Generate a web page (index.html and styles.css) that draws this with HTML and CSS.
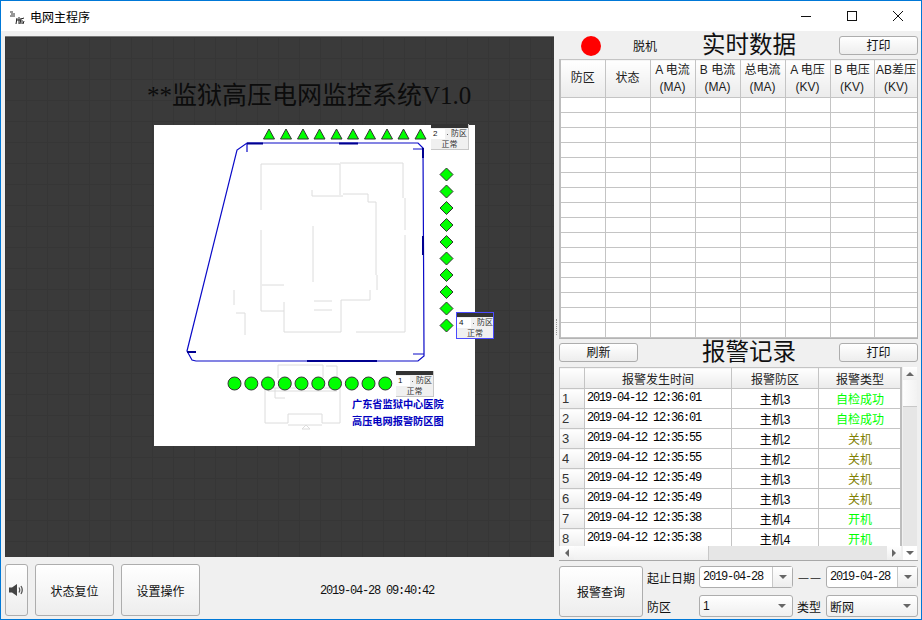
FILE: index.html
```html
<!DOCTYPE html>
<html lang="zh-CN">
<head>
	<meta charset="UTF-8">
	<meta name="viewport" content="width=device-width, initial-scale=1.0">
	<title>电网主程序</title>
	<link rel="stylesheet" href="styles.css">
</head>
<body>
<div class="window">
	<div class="titlebar">
		<svg class="app-icon" width="16" height="16" viewBox="0 0 16 16">
			<path d="M1 3h3M2 5h4M1 7h5" stroke="#333" stroke-width="1" fill="none"/>
			<path d="M8 9l-1 6M10 8v7M7 11h4M12 9l-1 6M12 10l3-1M13 11v4M15 12l-1 3" stroke="#222" stroke-width="1" fill="none"/>
		</svg>
		<span class="app-name">电网主程序</span>
		<div class="win-controls">
			<svg class="win-btn" width="46" height="30" viewBox="0 0 46 30"><path d="M18 15.500h10" stroke="#111"/></svg>
			<svg class="win-btn" width="46" height="30" viewBox="0 0 46 30"><rect x="18.500" y="10.500" width="9" height="9" fill="none" stroke="#111"/></svg>
			<svg class="win-btn" width="46" height="30" viewBox="0 0 46 30"><path d="M18 10l10 10M28 10l-10 10" stroke="#111" fill="none"/></svg>
		</div>
	</div>

	<div class="main">
		<div class="left">
			<div class="stage">
				<div class="stage-title">**监狱高压电网监控系统V1.0</div>
				<div class="map">
					<svg class="map-art" width="321" height="321" viewBox="154 125 321 321">
						<g class="plan">
							<path d="M261 210V164H340V195M340 163H403V198M405 198V230M405 235V332H356"/>
							<path d="M343 194H368V202H376V275M377 275V290M312 190V196H343M313 226V282"/>
							<path d="M261 230V311H284M262 285H284M284 302V332H341V300H370V290"/>
							<path d="M234 290V305M236 313H245V335M314 301H332M314 310H332"/>
							<path d="M278 378V365H323V378M326 366H337V378"/>
							<path d="M265 388H340V423H322V414H288V423H265ZM268 391H337M288 425H322M275 388V398H285"/>
							<path d="M302 429L306 425L310 429Z"/>
						</g>
						<path class="fence" d="M187 351L192 360L196 361H418L424 356V351L423 148L418 143H247L237 150Z"/>
						<path class="fence" d="M247 144V152M413 149H423M413 354H424"/>
						<path class="fence-thick" d="M247 143.500H263M339 143.500H358M423 148V158M423 236V255M307 361H377M187 352H196"/>

						<g class="sensor">
							<path d="M269 129l5.500 10h-11z"/><path d="M286 129l5.500 10h-11z"/><path d="M303 129l5.500 10h-11z"/><path d="M319.500 129l5.500 10h-11z"/><path d="M336.500 129l5.500 10h-11z"/>
							<path d="M353 129l5.500 10h-11z"/><path d="M370 129l5.500 10h-11z"/><path d="M387 129l5.500 10h-11z"/><path d="M403.500 129l5.500 10h-11z"/><path d="M420.500 129l5.500 10h-11z"/>

							<path d="M446.500 168l6.500 6.500-6.500 6.500-6.500-6.500z"/><path d="M446.500 185l6.500 6.500-6.500 6.500-6.500-6.500z"/><path d="M446.500 201.500l6.500 6.500-6.500 6.500-6.500-6.500z"/><path d="M446.500 218.500l6.500 6.500-6.500 6.500-6.500-6.500z"/><path d="M446.500 235.500l6.500 6.500-6.500 6.500-6.500-6.500z"/>
							<path d="M446.500 252l6.500 6.500-6.500 6.500-6.500-6.500z"/><path d="M446.500 268.500l6.500 6.500-6.500 6.500-6.500-6.500z"/><path d="M446.500 285.500l6.500 6.500-6.500 6.500-6.500-6.500z"/><path d="M446.500 302l6.500 6.500-6.500 6.500-6.500-6.500z"/><path d="M446.500 319l6.500 6.500-6.500 6.500-6.500-6.500z"/>

							<circle cx="234.500" cy="383.500" r="6.500"/><circle cx="251.300" cy="383.500" r="6.500"/><circle cx="268" cy="383.500" r="6.500"/><circle cx="284.800" cy="383.500" r="6.500"/><circle cx="301.500" cy="383.500" r="6.500"/>
							<circle cx="318.300" cy="383.500" r="6.500"/><circle cx="335" cy="383.500" r="6.500"/><circle cx="351.800" cy="383.500" r="6.500"/><circle cx="368.500" cy="383.500" r="6.500"/><circle cx="385.300" cy="383.500" r="6.500"/>
						</g>
					</svg>

					<div class="zone zone-top">
						<div class="zone-bar"></div>
						<div class="zone-row"><span class="zone-num">2</span><span class="zone-spin"></span><span class="zone-label">防区</span></div>
						<div class="zone-state">正常</div>
					</div>
					<div class="zone zone-side">
						<div class="zone-bar"></div>
						<div class="zone-row"><span class="zone-num">4</span><span class="zone-spin"></span><span class="zone-label">防区</span></div>
						<div class="zone-state">正常</div>
					</div>
					<div class="zone zone-bottom">
						<div class="zone-bar"></div>
						<div class="zone-row"><span class="zone-num">1</span><span class="zone-spin"></span><span class="zone-label">防区</span></div>
						<div class="zone-state">正常</div>
					</div>
					<div class="map-caption">广东省监狱中心医院<br>高压电网报警防区图</div>
				</div>
			</div>

			<div class="toolbar">
				<button class="btn btn-sound">
					<svg width="15" height="14" viewBox="0 0 15 14">
						<path d="M0 4.500h3L8 1v12L3 9.500H0z" fill="#444"/>
						<path d="M10 4.500q1.500 2.500 0 5M12 3q2.500 4 0 8" fill="none" stroke="#555" stroke-width="1.300"/>
					</svg>
				</button>
				<button class="btn btn-tool">状态复位</button>
				<button class="btn btn-tool">设置操作</button>
				<div class="clock mono">2019-04-28 09:40:42</div>
			</div>
		</div>

		<div class="splitter"><span class="grip"></span></div>

		<div class="right">
			<div class="head-row">
				<span class="led"></span>
				<span class="link-state">脱机</span>
				<span class="heading">实时数据</span>
				<button class="btn btn-small">打印</button>
			</div>

			<div class="data-box">
				<table class="data-table">
					<colgroup>
						<col class="col-wide"><col class="col-wide"><col class="col-wide"><col class="col-wide"><col class="col-wide"><col class="col-wide"><col class="col-narrow"><col class="col-narrow">
					</colgroup>
					<thead>
						<tr>
							<th>防区</th><th>状态</th><th>A 电流<br>(MA)</th><th>B 电流<br>(MA)</th><th>总电流<br>(MA)</th><th>A 电压<br>(KV)</th><th>B 电压<br>(KV)</th><th>AB差压<br>(KV)</th>
						</tr>
					</thead>
					<tbody>
						<tr><td></td><td></td><td></td><td></td><td></td><td></td><td></td><td></td></tr>
						<tr><td></td><td></td><td></td><td></td><td></td><td></td><td></td><td></td></tr>
						<tr><td></td><td></td><td></td><td></td><td></td><td></td><td></td><td></td></tr>
						<tr><td></td><td></td><td></td><td></td><td></td><td></td><td></td><td></td></tr>
						<tr><td></td><td></td><td></td><td></td><td></td><td></td><td></td><td></td></tr>
						<tr><td></td><td></td><td></td><td></td><td></td><td></td><td></td><td></td></tr>
						<tr><td></td><td></td><td></td><td></td><td></td><td></td><td></td><td></td></tr>
						<tr><td></td><td></td><td></td><td></td><td></td><td></td><td></td><td></td></tr>
						<tr><td></td><td></td><td></td><td></td><td></td><td></td><td></td><td></td></tr>
						<tr><td></td><td></td><td></td><td></td><td></td><td></td><td></td><td></td></tr>
						<tr><td></td><td></td><td></td><td></td><td></td><td></td><td></td><td></td></tr>
						<tr><td></td><td></td><td></td><td></td><td></td><td></td><td></td><td></td></tr>
						<tr><td></td><td></td><td></td><td></td><td></td><td></td><td></td><td></td></tr>
						<tr><td></td><td></td><td></td><td></td><td></td><td></td><td></td><td></td></tr>
						<tr><td></td><td></td><td></td><td></td><td></td><td></td><td></td><td></td></tr>
						<tr><td></td><td></td><td></td><td></td><td></td><td></td><td></td><td></td></tr>
					</tbody>
				</table>
			</div>

			<div class="head-row head-row-alarm">
				<button class="btn btn-small">刷新</button>
				<span class="heading heading-alarm">报警记录</span>
				<button class="btn btn-small">打印</button>
			</div>

			<div class="alarm-box">
				<div class="alarm-view">
					<table class="alarm-table">
						<colgroup>
							<col class="col-num"><col class="col-time"><col class="col-zone"><col class="col-type">
						</colgroup>
						<thead>
							<tr><th></th><th>报警发生时间</th><th>报警防区</th><th>报警类型</th></tr>
						</thead>
						<tbody>
							<tr><th>1</th><td class="time mono">2019-04-12 12:36:01</td><td>主机3</td><td class="ok">自检成功</td></tr>
							<tr><th>2</th><td class="time mono">2019-04-12 12:36:01</td><td>主机3</td><td class="ok">自检成功</td></tr>
							<tr><th>3</th><td class="time mono">2019-04-12 12:35:55</td><td>主机2</td><td class="off">关机</td></tr>
							<tr><th>4</th><td class="time mono">2019-04-12 12:35:55</td><td>主机2</td><td class="off">关机</td></tr>
							<tr><th>5</th><td class="time mono">2019-04-12 12:35:49</td><td>主机3</td><td class="off">关机</td></tr>
							<tr><th>6</th><td class="time mono">2019-04-12 12:35:49</td><td>主机3</td><td class="off">关机</td></tr>
							<tr><th>7</th><td class="time mono">2019-04-12 12:35:38</td><td>主机4</td><td class="ok">开机</td></tr>
							<tr><th>8</th><td class="time mono">2019-04-12 12:35:38</td><td>主机4</td><td class="ok">开机</td></tr>
						</tbody>
					</table>
				</div>
				<div class="vbar">
					<span class="sb-btn"><i class="arrow arrow-up"></i></span>
					<span class="vbar-thumb"></span>
					<span class="sb-track"></span>
					<span class="sb-btn sb-btn-plain"><i class="arrow arrow-down"></i></span>
				</div>
				<div class="hbar">
					<span class="sb-btn"><i class="arrow arrow-left"></i></span>
					<span class="hbar-thumb"></span>
					<span class="sb-track"></span>
					<span class="sb-btn"><i class="arrow arrow-right"></i></span>
				</div>
			</div>

			<div class="query">
				<button class="btn btn-query">报警查询</button>
				<div class="query-grid">
					<span class="q-label">起止日期</span>
					<div class="combo mono-combo"><span class="combo-text mono">2019-04-28</span><span class="combo-arrow combo-sep"><i class="arrow arrow-down"></i></span></div>
					<span class="q-dash">——</span>
					<div class="combo mono-combo"><span class="combo-text mono">2019-04-28</span><span class="combo-arrow combo-sep"><i class="arrow arrow-down"></i></span></div>

					<span class="q-label">防区</span>
					<div class="combo"><span class="combo-text">1</span><span class="combo-arrow"><i class="arrow arrow-down"></i></span></div>
					<span class="q-label q-label-mid">类型</span>
					<div class="combo"><span class="combo-text">断网</span><span class="combo-arrow"><i class="arrow arrow-down"></i></span></div>
				</div>
			</div>
		</div>
	</div>
</div>
</body>
</html>
```

FILE: styles.css
```css
* {
	box-sizing: border-box;
}
html, body {
	margin: 0;
	padding: 0;
}
body {
	width: 922px;
	height: 620px;
	overflow: hidden;
	font-family: "Liberation Sans", "Noto Sans CJK SC", sans-serif;
	font-size: 12px;
	color: #111;
	background-color: #f0f0f0;
}
.window {
	width: 922px;
	height: 620px;
	border: 1px solid #0078d7;
	background-color: #f0f0f0;
	display: flex;
	flex-direction: column;
}
.mono {
	font-family: "Liberation Mono", monospace;
	font-size: 12px;
	letter-spacing: -1.2px;
}

/* title bar */
.titlebar {
	height: 30px;
	background-color: #fff;
	display: flex;
	align-items: center;
	flex: none;
}
.app-icon {
	margin-left: 8px;
	margin-top: 1px;
}
.app-name {
	margin-left: 5px;
	font-size: 12px;
	color: #000;
}
.win-controls {
	margin-left: auto;
	display: flex;
}
.win-btn {
	display: block;
}

/* main split */
.main {
	flex: 1;
	display: flex;
	padding: 5px 3px 2px 4px;
	min-height: 0;
}
.left {
	width: 549px;
	display: flex;
	flex-direction: column;
	flex: none;
}
.splitter {
	width: 5px;
	display: flex;
	align-items: center;
	justify-content: center;
	flex: none;
}
.grip {
	height: 16px;
	border-left: 1px dotted #999;
}
.right {
	width: 359px;
	display: flex;
	flex-direction: column;
	flex: none;
}

/* dark stage with the map */
.stage {
	height: 521px;
	overflow: hidden;
	flex: none;
	padding-top: 44px;
	background-color: #3a3a3a;
	background-image:
		linear-gradient(#363636 1px, transparent 1px),
		linear-gradient(90deg, #363636 1px, transparent 1px);
	background-size: 21px 21px;
	border-top: 1px solid #777;
}
.stage-title {
	font-family: "Liberation Serif", "Noto Sans CJK SC", serif;
	font-size: 25px;
	line-height: 30px;
	color: #0c0c0c;
	padding-left: 142px;
	white-space: nowrap;
}
.map {
	position: relative;
	width: 321px;
	height: 321px;
	margin-top: 14px;
	margin-left: 149px;
	background-color: #fff;
}
.map-art {
	display: block;
}
.plan {
	fill: none;
	stroke: #dcdcdc;
	stroke-width: 1;
}
.fence {
	fill: none;
	stroke: #0a0ac8;
	stroke-width: 1.2;
}
.fence-thick {
	fill: none;
	stroke: #000090;
	stroke-width: 2;
}
.sensor {
	fill: #00ff00;
	stroke: #333;
	stroke-width: 1;
}

/* zone cards on the map */
.zone {
	position: absolute;
	width: 38px;
	height: 26px;
	background-color: #f0f0f0;
	border-right: 1px solid #c8c8c8;
	border-bottom: 1px solid #c8c8c8;
	font-size: 8px;
	line-height: 10px;
	color: #333;
}
.zone-top {
	left: 277px;
	top: -1px;
}
.zone-side {
	left: 302px;
	top: 187px;
	border: 1px solid #4a4aff;
	height: 27px;
}
.zone-bottom {
	left: 242px;
	top: 246px;
}
.zone-bar {
	height: 4px;
	background-color: #333;
}
.zone-row {
	display: flex;
	align-items: center;
	height: 10px;
	margin-top: 1px;
}
.zone-num {
	width: 14px;
	height: 10px;
	background-color: #fff;
	padding-left: 2px;
	color: #111;
}
.zone-spin {
	width: 1px;
	height: 1px;
	margin-left: 2px;
	background-color: #666;
}
.zone-label {
	margin-left: 3px;
}
.zone-state {
	text-align: center;
	height: 10px;
	margin-top: 1px;
}
.map-caption {
	position: absolute;
	left: 198px;
	top: 271px;
	font-size: 10.200px;
	line-height: 17px;
	color: #0000c0;
	font-weight: bold;
	white-space: nowrap;
}

/* buttons */
.btn {
	font-family: inherit;
	font-size: 12px;
	color: #111;
	padding: 0;
	border: 1px solid #adadad;
	border-radius: 3px;
	background: linear-gradient(#ffffff, #ededed);
}
.toolbar {
	display: flex;
	margin-top: 7px;
	height: 52px;
	flex: none;
}
.btn-sound {
	width: 23px;
	display: flex;
	align-items: center;
	justify-content: center;
}
.btn-tool {
	width: 79px;
	margin-left: 7px;
}
.clock {
	flex: 1;
	display: flex;
	align-items: center;
	justify-content: center;
	padding-top: 2px;
}
.btn-small {
	width: 79px;
	height: 19px;
	line-height: 16px;
	flex: none;
}

/* section headers */
.head-row {
	height: 19px;
	display: flex;
	align-items: center;
	flex: none;
}
.head-row-alarm {
	margin-top: 4px;
}
.led {
	width: 20px;
	height: 20px;
	border-radius: 50%;
	background-color: #ff0000;
	margin-left: 22px;
	flex: none;
}
.link-state {
	margin-left: 32px;
	width: 69px;
	flex: none;
}
.heading {
	font-family: "Liberation Serif", "Noto Sans CJK SC", serif;
	font-size: 23.500px;
	line-height: 19px;
	color: #111;
	width: 94px;
	white-space: nowrap;
	margin-right: 43px;
	flex: none;
}
.heading-alarm {
	margin-left: 64px;
}

/* realtime table */
.data-box {
	margin-top: 4px;
	height: 280px;
	overflow: hidden;
	background-color: #fff;
	border-right: 1px solid #b4b4b4;
	border-bottom: 1px solid #b4b4b4;
	flex: none;
}
.data-table {
	table-layout: fixed;
	border-collapse: collapse;
	width: 358px;
}
.col-wide {
	width: 45px;
}
.col-narrow {
	width: 44px;
}
.data-table th {
	height: 38px;
	padding: 0;
	font-weight: normal;
	font-size: 12px;
	line-height: 17px;
	background: linear-gradient(#ffffff, #ebebeb);
	border: 1px solid #c4c4c4;
	white-space: nowrap;
	color: #222;
}
.data-table td {
	height: 15px;
	padding: 0;
	border: 1px solid #c4c4c4;
}
.data-table tr > :first-child {
	border-left: 2px solid #bdbdbd;
}

/* alarm table */
.alarm-box {
	margin-top: 5px;
	height: 194px;
	flex: none;
	display: grid;
	grid-template-columns: 343px 15px;
	grid-template-rows: 179px 14px;
	background-color: #f0f0f0;
	border-bottom: 1px solid #a8a8a8;
}
.alarm-view {
	overflow: hidden;
	background-color: #fff;
	border-right: 2px solid #bdbdbd;
}
.alarm-table {
	table-layout: fixed;
	border-collapse: collapse;
	width: 342px;
}
.col-num {
	width: 25px;
}
.col-time {
	width: 147px;
}
.col-zone {
	width: 87px;
}
.col-type {
	width: 83px;
}
.alarm-table th {
	padding: 0;
	font-weight: normal;
	background: linear-gradient(#ffffff, #ebebeb);
	border: 1px solid #c4c4c4;
	color: #222;
}
.alarm-table thead th {
	height: 21px;
}
.alarm-table tbody th {
	text-align: left;
	padding-left: 2px;
	font-size: 13px;
	color: #333;
}
.alarm-table td {
	height: 20px;
	padding: 0;
	text-align: center;
	border: 1px solid #c4c4c4;
	color: #000;
}
.alarm-table td.time {
	text-align: left;
	padding-left: 2px;
	padding-bottom: 2px;
}
.alarm-table td.ok {
	color: #00ff00;
}
.alarm-table td.off {
	color: #808000;
}

/* scrollbars */
.vbar {
	grid-row: 1 / 3;
	grid-column: 2;
	display: flex;
	flex-direction: column;
	background-color: #e6e6e6;
	margin-left: 1px;
}
.hbar {
	grid-column: 1;
	grid-row: 2;
	display: flex;
	background-color: #e6e6e6;
	margin-left: 1px;
	margin-right: 1px;
}
.sb-btn {
	display: flex;
	align-items: center;
	justify-content: center;
	width: 14px;
	height: 13px;
	flex: none;
	background: linear-gradient(#ffffff, #eeeeee);
}
.sb-btn-plain {
	height: 14px;
	background: #fff;
}
.hbar .sb-btn {
	height: 14px;
}
.sb-track {
	flex: 1;
}
.vbar-thumb {
	height: 27px;
	flex: none;
	background: linear-gradient(90deg, #fdfdfd, #f2f2f2);
	border-bottom: 1px solid #c8c8c8;
}
.hbar-thumb {
	width: 135px;
	flex: none;
	background: linear-gradient(#fdfdfd, #f0f0f0);
	border-right: 1px solid #c8c8c8;
}
.arrow {
	display: block;
	width: 0;
	height: 0;
}
.arrow-up {
	border-left: 4px solid transparent;
	border-right: 4px solid transparent;
	border-bottom: 4px solid #666;
}
.arrow-down {
	border-left: 4px solid transparent;
	border-right: 4px solid transparent;
	border-top: 4px solid #666;
}
.arrow-left {
	border-top: 4px solid transparent;
	border-bottom: 4px solid transparent;
	border-right: 4px solid #666;
}
.arrow-right {
	border-top: 4px solid transparent;
	border-bottom: 4px solid transparent;
	border-left: 4px solid #666;
}

/* query form */
.query {
	display: flex;
	margin-top: 5px;
	flex: none;
}
.btn-query {
	width: 84px;
	height: 51px;
	flex: none;
}
.query-grid {
	margin-left: 4px;
	display: grid;
	grid-template-columns: 52px 94px 33px 92px;
	grid-template-rows: 22px 22px;
	row-gap: 7px;
	align-items: center;
}
.q-label {
	font-size: 12px;
	color: #111;
}
.q-label-mid {
	padding-left: 4px;
}
.q-dash {
	text-align: center;
	color: #222;
	letter-spacing: 2px;
	font-size: 10px;
	padding-left: 2px;
}
.combo {
	height: 22px;
	display: flex;
	align-items: center;
	border: 1px solid #adadad;
	border-radius: 3px;
	background: linear-gradient(#ffffff, #efefef);
}
.mono-combo {
	background: #fff;
}
.combo-text {
	flex: 1;
	padding-left: 3px;
}
.combo-arrow {
	width: 20px;
	height: 100%;
	display: flex;
	align-items: center;
	justify-content: center;
	flex: none;
}
.combo-sep {
	border-left: 1px solid #c8c8c8;
	background: linear-gradient(#ffffff, #ededed);
}
```
